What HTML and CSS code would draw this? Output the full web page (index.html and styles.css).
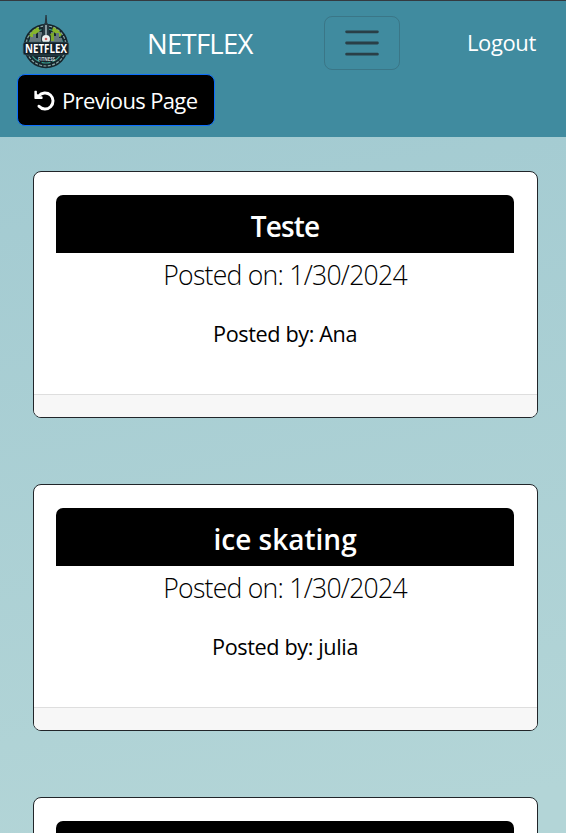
FILE: index.html
```html
<!DOCTYPE html>
<html lang="en">
<head>
<meta charset="utf-8">
<title>Netflex</title>
<link rel="stylesheet" href="styles.css">
</head>
<body>
<header class="navbar">
  <div class="nav-row">
    <svg class="logo" viewBox="0 0 48 54" role="img" aria-label="Netflex fitness">
      <circle cx="23" cy="31" r="22.3" fill="#15252c"/>
      <circle cx="23" cy="31" r="20" fill="none" stroke="#8aa6a6" stroke-width="1.2" stroke-dasharray="3 1.4"/>
      <circle cx="23" cy="31" r="17" fill="none" stroke="#3a9a8c" stroke-width="1.2" stroke-dasharray="9 2"/>
      <path d="M6 21a20 20 0 0 1 9-9l2 4a16 16 0 0 0-7 7zM30 12a20 20 0 0 1 9 8l-3 2a16 16 0 0 0-7-6z" fill="#86b52c"/>
      <path d="M7 27v-5h3v-3h3v4h2v-6h4v10zM28 27V17h3v4h2v-3h3v5h3v4z" fill="#66787d"/>
      <path d="M27 26v-7l4-2v9z" fill="#7ba82e"/>
      <path d="M22.4 0h1.3l.5 8 1.8 2v7l2 4v6h-10v-6l2-4v-7l1.8-2z" fill="#26373f"/>
      <path d="M23 10v10" stroke="#a8bcc1" stroke-width="1.5"/>
      <circle cx="23" cy="24" r="4" fill="#edf1f0"/>
      <circle cx="23" cy="24" r="1.3" fill="#c66"/>
      <rect x=".2" y="27" width="45.6" height="13" rx="2.5" fill="#152229" stroke="#42606a" stroke-width=".6"/>
      <text class="logo-name" x="2" y="38" textLength="42" lengthAdjust="spacingAndGlyphs">NETFLEX</text>
      <text class="logo-sub" x="15" y="46" textLength="17" lengthAdjust="spacingAndGlyphs">FITNESS</text>
    </svg>
    <a class="brand">NETFLEX</a>
    <button class="toggler" aria-label="Menu">
      <svg viewBox="0 0 30 30"><path stroke="rgba(33,37,41,.75)" stroke-linecap="round" stroke-width="2" d="M4 7h22M4 15h22M4 23h22"/></svg>
    </button>
    <a class="logout">Logout</a>
  </div>
  <button class="back">
    <svg viewBox="0 0 22 22"><path d="M5 6.2A8.4 8.4 0 1 1 5.2 17" fill="none" stroke="#fff" stroke-width="3.1" stroke-linecap="round"/><path d="M.4 1.4Q.4.8 1 .8H2.4Q3 .8 3 1.4V4L6 6.6H8Q9 6.6 9 7.5V8.7Q9 9.4 8.3 9.4H1.2Q.4 9.4.4 8.6Z" fill="#fff"/></svg>
    <span>Previous Page</span>
  </button>
</header>
<main class="posts">
  <article class="card">
    <div class="card-body">
      <h2 class="card-title card-title-tight">Teste</h2>
      <p class="date">Posted on: 1/30/2024</p>
      <p class="author">Posted by: Ana</p>
    </div>
    <div class="card-footer"></div>
  </article>
  <article class="card">
    <div class="card-body">
      <h2 class="card-title">ice skating</h2>
      <p class="date">Posted on: 1/30/2024</p>
      <p class="author">Posted by: julia</p>
    </div>
    <div class="card-footer"></div>
  </article>
  <article class="card">
    <div class="card-body">
      <h2 class="card-title"></h2>
    </div>
    <div class="card-footer"></div>
  </article>
</main>
</body>
</html>
```
FILE: styles.css
```css
* { box-sizing: border-box; }
html { height: 100%; overflow: hidden; }
body {
  margin: 0;
  height: 833px;
  overflow: hidden;
  display: flex;
  flex-direction: column;
  font-family: "Open Sans", "Noto Sans", sans-serif;
  font-size: 22.4px;
  color: #000;
  background: linear-gradient(170deg, #a2cad1 10%, #b3d5d7 95%);
}
.navbar {
  flex: none;
  height: 137px;
  border-top: 1px solid #343a40;
  background: #408b9f;
  color: #fff;
  padding: 13px 0 0;
}
.nav-row { display: flex; align-items: center; height: 58px; }
.logo { width: 48px; height: 54px; margin: -3px 0 0 23px; flex: none; overflow: visible; }
.logo-name { font: bold 13px "Open Sans", sans-serif; fill: #fff; }
.logo-sub { font: bold 5px "Open Sans", sans-serif; fill: #cfdcdc; }
.brand { width: 107px; margin-left: 76px; font-size: 27.5px; letter-spacing: -.75px; white-space: nowrap; }
.toggler {
  width: 76px; height: 54px; margin-left: 70px; padding: 0;
  display: flex; align-items: center; justify-content: center;
  border: 1px solid rgba(33,37,41,.2); border-radius: 8px; background: none;
}
.toggler svg { width: 42px; height: 42px; }
.logout { margin: -2px 0 0 67px; font-size: 22px; letter-spacing: -.4px; }
.back {
  display: flex; align-items: center; gap: 7px;
  width: 198px; height: 52px; margin: 2px 0 0 17px; padding: 0 0 0 16px;
  border: 1.4px solid #0d6efd; border-radius: 8px;
  background: #000; color: #fff;
  font: 22px "Open Sans", sans-serif; letter-spacing: -.65px; white-space: nowrap;
}
.back svg { width: 21px; height: 21px; flex: none; }
.posts {
  flex: 1; min-height: 0; overflow: hidden;
  display: flex; flex-direction: column; gap: 66px;
  padding: 34px 28.5px 0 33px;
}
.card {
  flex: none;
  height: 247px;
  display: flex; flex-direction: column;
  border: 1.4px solid #212529; border-radius: 8px;
  background: #fff; overflow: hidden; text-align: center;
}
.card-body { flex: 1; padding: 23px 22.4px 0 22px; }
.card-title {
  margin: 0; height: 58px; line-height: 62px;
  border-radius: 7px 7px 0 0; background: #000; color: #fff;
  font-size: 28px; font-weight: 600; letter-spacing: 0;
}
.card-title-tight { letter-spacing: -.8px; }
/* Condensed slightly to keep the subtitle compact */
.date { margin: 3px 0 0; line-height: 36px; font-size: 28px; font-weight: 300; letter-spacing: -.8px; transform: scaleX(.95); }
.author { margin: 25px 0 0; line-height: 34px; font-size: 22.4px; letter-spacing: -.4px; transform: scaleX(.967); }
.card-footer { height: 23px; border-top: 1.4px solid #dedede; background: #f7f7f7; }
```
